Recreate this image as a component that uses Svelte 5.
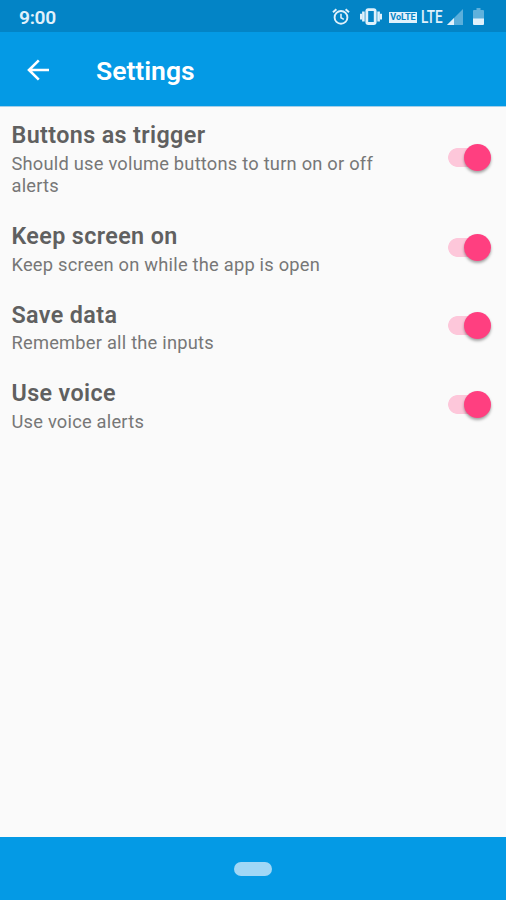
<script>
  let settings = $state([
    { title: 'Buttons as trigger', summary: 'Should use volume buttons to turn on or off alerts', on: true },
    { title: 'Keep screen on', summary: 'Keep screen on while the app is open', on: true },
    { title: 'Save data', summary: 'Remember all the inputs', on: true },
    { title: 'Use voice', summary: 'Use voice alerts', on: true }
  ]);
</script>

<div class="screen">
  <div class="status-bar">
    <span class="time">9:00</span>
    <div class="status-icons">
      <svg class="alarm" width="18" height="18" viewBox="0 0 18 18" fill="none" stroke="currentColor">
        <circle cx="9" cy="9.4" r="6.4" stroke-width="1.9" />
        <path d="M9 5.8v4l2.8 1.6" stroke-width="1.6" />
        <path d="M1 4.2l3.4-3M17 4.2l-3.4-3" stroke-width="2" />
      </svg>
      <svg class="vibrate" width="22" height="18" viewBox="0 0 22 18">
        <rect x="6.8" y="1.7" width="8.4" height="13.8" rx="1.5" fill="none" stroke="currentColor" stroke-width="2.8" />
        <path d="M3.4 3.6v10M18.6 3.6v10" stroke="currentColor" stroke-width="2.6" />
        <path d="M1 5.8v5.6M21 5.8v5.6" stroke="currentColor" stroke-width="2" />
      </svg>
      <span class="volte">VoLTE</span>
      <span class="lte">LTE</span>
      <svg class="signal" width="16" height="16" viewBox="0 0 16 16">
        <path d="M0 16L16 0v16z" fill="currentColor" opacity="0.4" />
        <path d="M0 16l7-7v7z" fill="currentColor" />
      </svg>
      <svg class="battery" width="12" height="18" viewBox="0 0 12 18">
        <path d="M3.5 0h4v2H10a1 1 0 011 1v8H0V3a1 1 0 011-1h2.5z" fill="currentColor" opacity="0.42" />
        <path d="M0 10.5h11V16a1 1 0 01-1 1H1a1 1 0 01-1-1z" fill="currentColor" />
      </svg>
    </div>
  </div>

  <header>
    <button class="back" aria-label="Back">
      <svg width="24" height="24" viewBox="0 0 24 24" fill="none" stroke="currentColor" stroke-width="2.6">
        <path d="M23 12H3.5M12.8 2.4L3 12l9.8 9.6" />
      </svg>
    </button>
    <h1>Settings</h1>
  </header>

  <main>
    {#each settings as item}
      <div class="row">
        <div class="text">
          <h2>{item.title}</h2>
          <p>{item.summary}</p>
        </div>
        <button
          class="switch"
          class:on={item.on}
          role="switch"
          aria-checked={item.on}
          aria-label={item.title}
          onclick={() => (item.on = !item.on)}
        >
          <span class="thumb"></span>
        </button>
      </div>
    {/each}
  </main>

  <nav>
    <span class="home"></span>
  </nav>
</div>

<style>
  :global(body) {
    margin: 0;
  }

  .screen {
    display: flex;
    flex-direction: column;
    width: 506px;
    height: 900px;
    overflow: hidden;
    background: #fafafa;
    font-family: Roboto, sans-serif;
  }

  button {
    padding: 0;
    border: 0;
    background: none;
    cursor: pointer;
  }

  .status-bar {
    display: flex;
    flex: none;
    align-items: center;
    justify-content: space-between;
    box-sizing: border-box;
    height: 32px;
    padding: 2px 21px 0 19px;
    background: #0384c6;
    color: #e0f1fb;
  }

  .time {
    font-size: 19.2px;
    font-weight: 600;
    letter-spacing: -0.3px;
    line-height: 31px;
  }

  .status-icons {
    display: flex;
    align-items: center;
  }

  .vibrate {
    margin-left: 10px;
  }

  .volte {
    width: 28px;
    height: 11px;
    margin-left: 7px;
    background: #e0f1fb;
    color: #0384c6;
    font-size: 9px;
    font-weight: 700;
    line-height: 11px;
    text-align: center;
  }

  .lte {
    width: 28px;
    margin: 0 -5px 0 4px;
    font-size: 18.5px;
    font-weight: 500;
    line-height: 30px;
    white-space: nowrap;
    transform: scaleX(0.73);
    transform-origin: left;
  }

  .signal {
    margin-left: 3px;
  }

  .battery {
    margin-left: 10px;
  }

  header {
    display: flex;
    flex: none;
    align-items: center;
    box-sizing: border-box;
    height: 75px;
    padding: 1px 26px 0;
    border-bottom: 1px solid #a3cfe9;
    background: #049ae5;
    color: #fff;
  }

  .back {
    height: 24px;
    color: inherit;
  }

  .back svg {
    display: block;
  }

  h1 {
    margin: 3px 0 0 46px;
    font-size: 26.5px;
    font-weight: 600;
    line-height: 32px;
  }

  main {
    flex: 1;
  }

  .row {
    display: flex;
    align-items: center;
    justify-content: space-between;
    padding: 13.35px 15px 13.35px 11.5px;
  }

  .text {
    width: 380px;
    color: #606060;
  }

  h2 {
    margin: 0;
    font-size: 23.3px;
    font-weight: 600;
    line-height: 30px;
    letter-spacing: 0.38px;
  }

  /* the summary hangs slightly below the row's centred block */
  p {
    margin: 2.7px 0 -2.7px;
    color: #777;
    font-size: 18.3px;
    line-height: 22px;
    letter-spacing: 0.22px;
  }

  .switch {
    display: flex;
    align-items: center;
    width: 43px;
    height: 27px;
    background: linear-gradient(#c4c4c4, #c4c4c4) 0 50% / 43px 19px no-repeat;
    background-clip: content-box;
  }

  .switch.on {
    justify-content: flex-end;
    background: radial-gradient(circle at 9.5px 9.5px, #fdc7da 9px, transparent 9.7px) 0 50% / 9.5px 19px no-repeat,
      linear-gradient(#fdc7da, #fdc7da) 9px 50% / 20px 19px no-repeat;
  }

  .thumb {
    width: 27px;
    height: 27px;
    border-radius: 50%;
    background: #fafafa;
    box-shadow: 0 2px 3px rgba(0, 0, 0, 0.35);
  }

  .on .thumb {
    background: #ff3f80;
  }

  nav {
    display: flex;
    flex: none;
    align-items: center;
    justify-content: center;
    height: 63px;
    background: #049ae5;
  }

  .home {
    width: 38px;
    height: 14px;
    border-radius: 7px;
    background: #a0d7f6;
  }
</style>
